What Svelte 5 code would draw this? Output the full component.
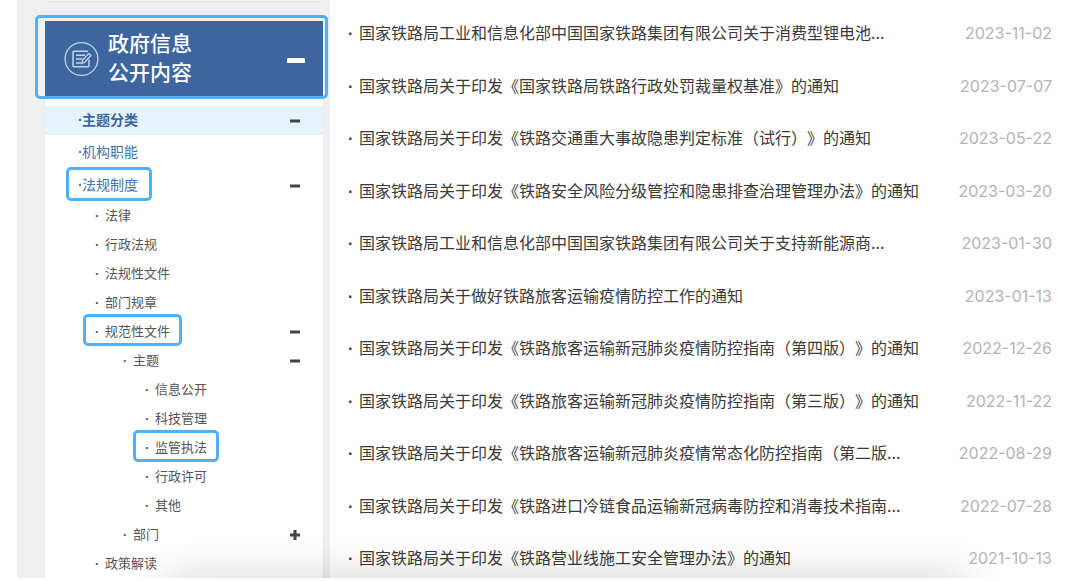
<script>
  // level: indent depth, mark: outlined entry, toggle: state of the fold button
  let menu = $state([
    { level: 1, label: '主题分类', toggle: 'open', active: true },
    { level: 1, label: '机构职能' },
    { level: 1, label: '法规制度', toggle: 'open', mark: true },
    { level: 2, label: '法律' },
    { level: 2, label: '行政法规' },
    { level: 2, label: '法规性文件' },
    { level: 2, label: '部门规章' },
    { level: 2, label: '规范性文件', toggle: 'open', mark: true },
    { level: 3, label: '主题', toggle: 'open' },
    { level: 4, label: '信息公开' },
    { level: 4, label: '科技管理' },
    { level: 4, label: '监管执法', mark: true },
    { level: 4, label: '行政许可' },
    { level: 4, label: '其他' },
    { level: 3, label: '部门', toggle: 'closed' },
    { level: 2, label: '政策解读' },
  ]);

  const notices = [
    { title: '国家铁路局工业和信息化部中国国家铁路集团有限公司关于消费型锂电池...', date: '2023-11-02' },
    { title: '国家铁路局关于印发《国家铁路局铁路行政处罚裁量权基准》的通知', date: '2023-07-07' },
    { title: '国家铁路局关于印发《铁路交通重大事故隐患判定标准（试行）》的通知', date: '2023-05-22' },
    { title: '国家铁路局关于印发《铁路安全风险分级管控和隐患排查治理管理办法》的通知', date: '2023-03-20' },
    { title: '国家铁路局工业和信息化部中国国家铁路集团有限公司关于支持新能源商...', date: '2023-01-30' },
    { title: '国家铁路局关于做好铁路旅客运输疫情防控工作的通知', date: '2023-01-13' },
    { title: '国家铁路局关于印发《铁路旅客运输新冠肺炎疫情防控指南（第四版）》的通知', date: '2022-12-26' },
    { title: '国家铁路局关于印发《铁路旅客运输新冠肺炎疫情防控指南（第三版）》的通知', date: '2022-11-22' },
    { title: '国家铁路局关于印发《铁路旅客运输新冠肺炎疫情常态化防控指南（第二版...', date: '2022-08-29' },
    { title: '国家铁路局关于印发《铁路进口冷链食品运输新冠病毒防控和消毒技术指南...', date: '2022-07-28' },
    { title: '国家铁路局关于印发《铁路营业线施工安全管理办法》的通知', date: '2021-10-13' },
  ];

  function flip(item) {
    item.toggle = item.toggle === 'open' ? 'closed' : 'open';
  }
</script>

<div class="page">
  <aside class="sidebar">
    <div class="prev-panel"></div>

    <div class="panel-head">
      <svg class="head-icon" viewBox="0 0 36 36" fill="none" stroke="#c5d3e8" aria-hidden="true">
        <circle cx="17.5" cy="18" r="16.4" stroke-width="1.3" />
        <path d="M25 18.5v6.3q0 1-1 1H10q-1 0-1-1V11.200q0-1 1-1h14" stroke-width="1.5" />
        <path d="M12 14.300h9M12 18h6.500M12 22h5" stroke-width="1.5" />
        <path d="M24.500 12.600l2.300 2-6 6.700-3 1.200.8-3.200z" stroke-width="1.300" />
      </svg>
      <h2>政府信息<br />公开内容</h2>
      <button class="head-toggle" aria-label="收起政府信息公开内容"><span></span></button>
    </div>

    <ul class="menu">
      {#each menu as item}
        <li class="item level-{item.level}" class:active={item.active}>
          <a href="#menu" class:mark={item.mark}><span class="dot">·</span>{item.label}</a>
          {#if item.toggle}
            <button class="toggle" aria-label="展开或收起{item.label}" onclick={() => flip(item)}>
              <svg viewBox="0 0 12 12" aria-hidden="true">
                <path d={item.toggle === 'open' ? 'M1 6h10' : 'M1 6h10M6 1v10'} stroke="#444" stroke-width="3" />
              </svg>
            </button>
          {/if}
        </li>
      {/each}
    </ul>
  </aside>

  <main>
    <ul class="notices">
      {#each notices as notice}
        <li>
          <a href="#notice"><span class="dot">·</span>{notice.title}</a>
          <time datetime={notice.date}>{notice.date}</time>
        </li>
      {/each}
    </ul>
  </main>
</div>

<style>
  :global(body) {
    margin: 0;
    background: #fff;
  }

  .page {
    position: relative;
    display: flex;
    margin-left: 17px;
    overflow: hidden;
    background: #fefefe;
    font-family: "Noto Sans CJK SC", sans-serif;
    text-spacing-trim: space-all;
  }

  /* shadow rising from below the bottom edge */
  .page::after {
    content: '';
    position: absolute;
    top: 100%;
    left: 14%;
    right: 11%;
    height: 40px;
    box-shadow: 0 0 44px rgba(0, 0, 0, 0.18);
    pointer-events: none;
  }

  ul {
    list-style: none;
    margin: 0;
    padding: 0;
  }

  a {
    color: inherit;
    text-decoration: none;
  }

  button {
    display: flex;
    align-items: center;
    justify-content: center;
    padding: 0;
    border: 0;
    background: none;
    cursor: pointer;
  }

  .dot {
    display: inline-block;
    font-family: "Liberation Sans", sans-serif;
    font-weight: 700;
  }

  /* Sidebar */
  .sidebar {
    flex: 0 0 278px;
    display: flex;
    flex-direction: column;
    padding: 0 7px 0 28px;
    background: #f0f0f0;
  }

  .prev-panel {
    height: 1px;
    margin-bottom: 19px;
    background: #f6f6f6;
    border-bottom: 1px solid #e4e4e4;
  }

  .panel-head {
    position: relative;
    display: flex;
    align-items: center;
    height: 75px;
    padding: 0 18px 0 19px;
    background: #3d659e;
    color: #fff;
  }

  .panel-head::after,
  .mark::after {
    content: '';
    position: absolute;
    border: 3px solid #50b0fa;
    border-radius: 5px;
    pointer-events: none;
  }

  .panel-head::after {
    inset: -6px -5px -3px -10px;
  }

  .head-icon {
    width: 36px;
    height: 36px;
  }

  .panel-head h2 {
    flex: 1;
    margin: 0 0 0 8px;
    padding-bottom: 3px;
    font-size: 21px;
    line-height: 29px;
    font-weight: 500;
  }

  .head-toggle {
    padding-top: 3px;
  }

  .head-toggle span {
    width: 18px;
    height: 5px;
    border-radius: 1px;
    background: #fff;
  }

  .menu {
    flex: 1;
    padding-top: 10px;
    background: #fff;
    box-shadow: 0 0 1px #ccc;
  }

  .item {
    display: flex;
    align-items: center;
    justify-content: space-between;
    height: 29px;
    padding-right: 22px;
    font-size: 13px;
    line-height: 27px;
    color: #555;
  }

  .item a {
    position: relative;
    padding-bottom: 2px;
  }

  .item .dot {
    width: 10px;
  }

  .level-1 {
    height: 30px;
    padding-left: 33px;
    font-size: 14px;
    color: #4672ad;
  }

  .level-1 + .level-1 {
    margin-top: 3px;
  }

  .level-1 .dot {
    width: 4px;
  }

  .level-1.active {
    height: 29px;
    background: #e6f3fe;
    color: #3d659e;
    font-weight: 700;
  }

  .level-2 { padding-left: 50px; }
  .level-3 { padding-left: 78px; }
  .level-4 { padding-left: 100px; }

  .mark::after {
    inset: -3px -12px 1px;
  }

  .level-1 .mark::after {
    inset: -4px -14px 0 -12px;
  }

  .toggle svg {
    width: 12px;
    height: 12px;
  }

  /* Notice list */
  main {
    flex: 1;
    min-width: 0;
  }

  .notices {
    display: flex;
    flex-direction: column;
    justify-content: space-between;
    box-sizing: border-box;
    height: 100%;
    padding: 20px 28px 7px 18px;
  }

  .notices li {
    display: flex;
    align-items: center;
    justify-content: space-between;
    line-height: 24px;
    font-size: 16px;
    color: #3a3a3a;
    white-space: nowrap;
  }

  .notices .dot {
    width: 11px;
  }

  time {
    font-family: Inter, sans-serif;
    color: #b4b4b4;
  }
</style>
